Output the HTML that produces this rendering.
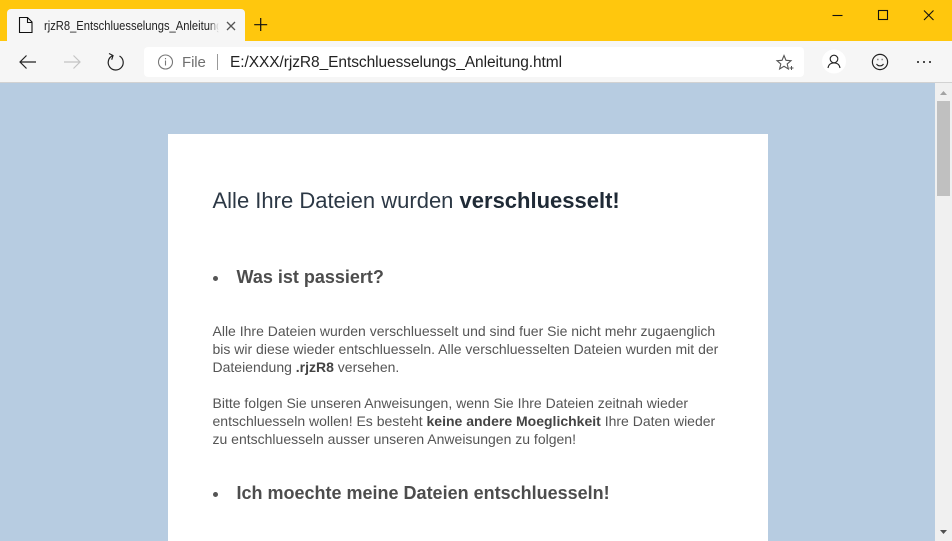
<!DOCTYPE html>
<html><head><meta charset="utf-8"><style>
html,body{margin:0;padding:0;width:952px;height:541px;overflow:hidden;background:#b7cce1;font-family:"Liberation Sans",sans-serif}
.a{position:absolute;white-space:nowrap}
.p{left:212.5px;font-size:14px;line-height:18px;color:#555;height:18px}
.p b{color:#444}
svg{position:absolute;overflow:visible;fill:none}
</style></head><body>
<div class="a" style="left:0;top:0;width:952px;height:41px;background:#ffc70d"></div>
<div class="a" style="left:7px;top:9px;width:238px;height:32px;background:#f6f6f6;border-radius:4px 4px 0 0"></div>
<div class="a" style="left:0;top:41px;width:952px;height:42px;background:#f6f6f6;border-bottom:1px solid #d2d2d2;box-sizing:border-box"></div>
<div class="a" style="left:144px;top:47px;width:660px;height:30px;background:#fff;border-radius:4px"></div>
<div class="a" style="left:44px;top:17px;width:203px;overflow:hidden;font-size:13px;line-height:17px;color:#222;transform:scaleX(.86);transform-origin:0 0">rjzR8_Entschluesselungs_Anleitung</div>
<div class="a" style="left:209px;top:15px;width:10px;height:20px;background:linear-gradient(90deg,rgba(246,246,246,0),#f6f6f6)"></div>
<div class="a" style="left:182px;top:54px;font-size:15px;line-height:18px;color:#6f6f6f;letter-spacing:-.1px">File</div>
<div class="a" style="left:217px;top:54px;width:1px;height:16px;background:#999"></div>
<div class="a" style="left:230px;top:54px;font-size:15.5px;line-height:18px;color:#222;letter-spacing:-.07px">E:/XXX/rjzR8_Entschluesselungs_Anleitung.html</div>

<svg style="left:0;top:0" width="952" height="83" viewBox="0 0 952 83">
<path d="M19.500 17.500h8l4.500 4.500V32.500H19.500zM27.500 17.500v5h4.500" stroke="#111" stroke-width="1.100"/>
<path d="M227 22l8 8M235 22l-8 8" stroke="#555" stroke-width="1.300"/>
<path d="M260.700 18v13M254.200 24.700h13" stroke="#111" stroke-width="1.200"/>
<path d="M20 62h16M26.500 55.500L20 62l6.500 6.500" stroke="#222" stroke-width="1.200"/>
<path d="M64 62h16M73.500 55.500L80 62l-6.500 6.500" stroke="#c4c4c4" stroke-width="1.200"/>
<path d="M112.500 55.700A7.500 7.500 0 1 0 119.500 56M109 53.500l4 2-1.300 4.200" stroke="#222" stroke-width="1.200"/>
<circle cx="165.500" cy="62" r="7" stroke="#777" stroke-width="1.100"/>
<path d="M165.500 60.500v5M165.500 58v1.200" stroke="#777" stroke-width="1.100"/>
<path d="M832.500 15.500h10" stroke="#111" stroke-width="1.100"/>
<rect x="878.500" y="10.500" width="9" height="9" stroke="#111" stroke-width="1.100"/>
<path d="M924 10.500l9.500 9.500M933.500 10.500L924 20" stroke="#111" stroke-width="1.100"/>
<path d="M784 55.500l2 4.800 5 .4-3.800 3.300 1.200 5-4.400-2.700-4.400 2.700 1.200-5-3.800-3.300 5-.4z" stroke="#555" stroke-width="1.100"/>
<path d="M789.500 68h4M791.500 66v4" stroke="#555" stroke-width="1"/>
<circle cx="834" cy="61.500" r="12" fill="#fff"/>
<circle cx="834" cy="59" r="3.800" stroke="#222" stroke-width="1.100"/>
<path d="M828 68c.5-3.500 2.500-5 6-5s5.500 1.500 6 5" stroke="#222" stroke-width="1.100"/>
<circle cx="880" cy="62" r="7.600" stroke="#222" stroke-width="1.200"/>
<path d="M876.500 64c1.800 2.500 5.200 2.500 7 0" stroke="#222" stroke-width="1.100"/>
<path d="M877.500 59.500h.8M881.700 59.500h.8" stroke="#222" stroke-width="1.400"/>
<path d="M917 62h2M923 62h2M929 62h2" stroke="#333" stroke-width="1.700"/>
</svg>

<div class="a" style="left:935px;top:83px;width:17px;height:458px;background:#f0f0f0"></div>
<div class="a" style="left:937px;top:101px;width:13px;height:95px;background:#c0c0c0"></div>
<svg style="left:935px;top:83px" width="17" height="458" viewBox="0 0 17 458">
<path d="M5 12h7L8.500 8z" fill="#a3a3a3"/>
<path d="M5 447h7l-3.500 4z" fill="#505050"/>
</svg>

<div class="a" style="left:168px;top:134px;width:600px;height:407px;background:#fff"></div>
<div class="a" style="left:212.500px;top:187px;font-size:22px;line-height:28px;color:#2c3845">Alle Ihre Dateien wurden <b style="color:#1f2a36">verschluesselt!</b></div>
<div class="a" style="left:213px;top:276px;width:5px;height:5px;border-radius:50%;background:#555"></div>
<div class="a" style="left:236.500px;top:266px;font-size:18px;line-height:22px;font-weight:bold;color:#4d4d4d">Was ist passiert?</div>
<div class="a p" style="top:322px">Alle Ihre Dateien wurden verschluesselt und sind fuer Sie nicht mehr zugaenglich</div>
<div class="a p" style="top:340px">bis wir diese wieder entschluesseln. Alle verschluesselten Dateien wurden mit der</div>
<div class="a p" style="top:358px">Dateiendung <b>.rjzR8</b> versehen.</div>
<div class="a p" style="top:394px">Bitte folgen Sie unseren Anweisungen, wenn Sie Ihre Dateien zeitnah wieder</div>
<div class="a p" style="top:412px">entschluesseln wollen! Es besteht <b>keine andere Moeglichkeit</b> Ihre Daten wieder</div>
<div class="a p" style="top:430px">zu entschluesseln ausser unseren Anweisungen zu folgen!</div>
<div class="a" style="left:213px;top:492px;width:5px;height:5px;border-radius:50%;background:#555"></div>
<div class="a" style="left:236.500px;top:482px;font-size:18px;line-height:22px;font-weight:bold;color:#4d4d4d">Ich moechte meine Dateien entschluesseln!</div>
</body></html>
